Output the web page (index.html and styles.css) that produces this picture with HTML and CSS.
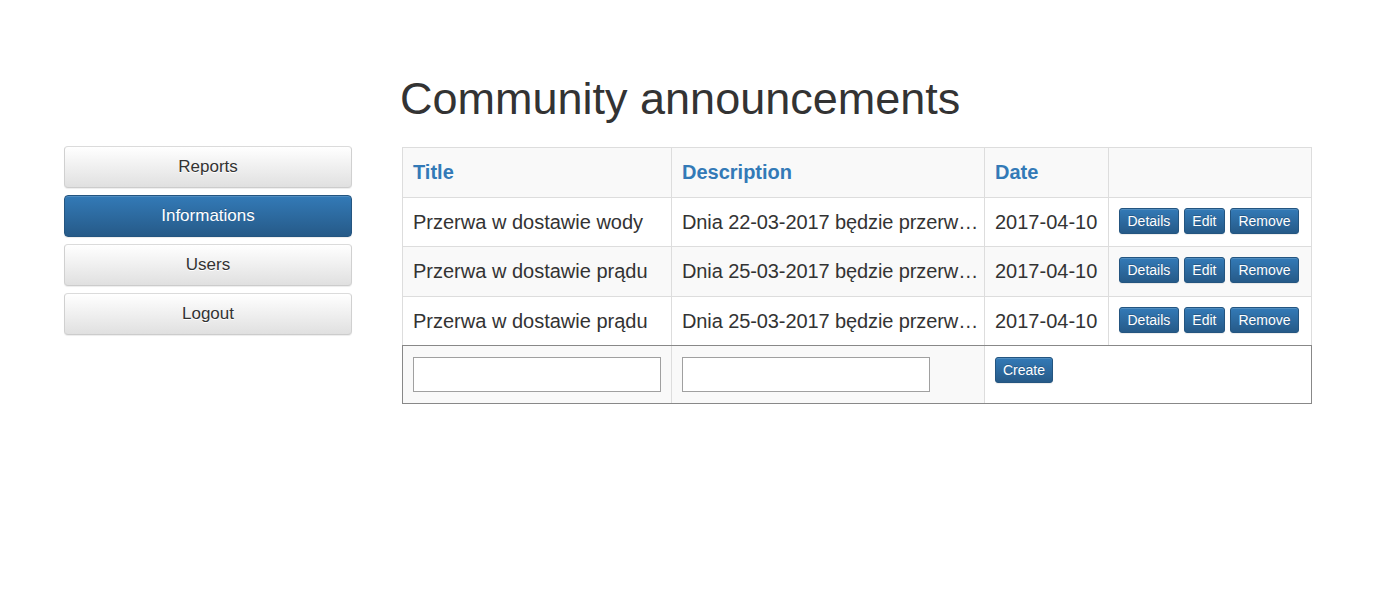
FILE: index.html
```html
<!DOCTYPE html>
<html lang="en">
<head>
<meta charset="utf-8">
<title>Community announcements</title>
<link rel="stylesheet" href="styles.css">
</head>
<body>
<div class="page">
  <h1 class="title">Community announcements</h1>
  <nav class="sidebar">
    <a class="side-btn">Reports</a>
    <a class="side-btn active">Informations</a>
    <a class="side-btn">Users</a>
    <a class="side-btn">Logout</a>
  </nav>
  <main class="main">
    <table class="grid">
      <colgroup>
        <col class="c-title">
        <col class="c-desc">
        <col class="c-date">
        <col class="c-act">
      </colgroup>
      <thead>
        <tr class="stripe">
          <th class="col-title"><a class="sort">Title</a></th>
          <th class="col-desc"><a class="sort">Description</a></th>
          <th class="col-date"><a class="sort">Date</a></th>
          <th></th>
        </tr>
      </thead>
      <tbody>
        <tr>
          <td class="col-title">Przerwa w dostawie wody</td>
          <td class="col-desc desc">Dnia 22-03-2017 będzie przerwa w dostawie wody</td>
          <td class="col-date">2017-04-10</td>
          <td class="actions"><a class="btn">Details</a> <a class="btn">Edit</a> <a class="btn">Remove</a></td>
        </tr>
        <tr class="stripe">
          <td class="col-title">Przerwa w dostawie prądu</td>
          <td class="col-desc desc">Dnia 25-03-2017 będzie przerwa w dostawie prądu</td>
          <td class="col-date">2017-04-10</td>
          <td class="actions"><a class="btn">Details</a> <a class="btn">Edit</a> <a class="btn">Remove</a></td>
        </tr>
        <tr class="last">
          <td class="col-title">Przerwa w dostawie prądu</td>
          <td class="col-desc desc">Dnia 25-03-2017 będzie przerwa w dostawie prądu</td>
          <td class="col-date">2017-04-10</td>
          <td class="actions"><a class="btn">Details</a> <a class="btn">Edit</a> <a class="btn">Remove</a></td>
        </tr>
        <tr class="form-row">
          <td class="f-cell"><input class="field" type="text"></td>
          <td class="f-cell"><input class="field" type="text"></td>
          <td class="f-create" colspan="2"><button class="btn btn-create" type="button">Create</button></td>
        </tr>
      </tbody>
    </table>
  </main>
</div>
</body>
</html>
```

FILE: styles.css
```css
html, body {
  margin: 0;
  padding: 0;
  background: #fff;
}

body {
  font-family: "Liberation Sans", Arial, Helvetica, sans-serif;
  color: #333;
}

.page {
  display: grid;
  grid-template-columns: 288px 912px;
  grid-template-rows: auto auto;
  column-gap: 48px;
  padding: 74px 0 0 64px;
}

.title {
  grid-column: 2;
  grid-row: 1;
  margin: 0 0 22.5px 0;
  font-size: 45px;
  font-weight: 400;
  line-height: 1.1;
  color: #333;
}

.sidebar {
  grid-column: 1;
  grid-row: 2;
  display: flex;
  flex-direction: column;
  gap: 7px;
}

.side-btn {
  display: block;
  box-sizing: border-box;
  height: 42px;
  padding: 8px 12px;
  font-size: 17px;
  line-height: 24px;
  text-align: center;
  color: #333;
  border: 1px solid #ccc;
  border-color: #dbdbdb #d0d0d0 #ccc;
  border-radius: 4px;
  background-image: linear-gradient(to bottom, #fff 0, #e0e0e0 100%);
  text-shadow: 0 1px 0 #fff;
  box-shadow: inset 0 1px 0 rgba(255, 255, 255, .15), 0 1px 1px rgba(0, 0, 0, .075);
}

.side-btn.active {
  color: #fff;
  border-color: #245580;
  background-image: linear-gradient(to bottom, #337ab7 0, #265a88 100%);
  text-shadow: 0 -1px 0 rgba(0, 0, 0, .2);
}

.main {
  grid-column: 2;
  grid-row: 2;
}

.grid {
  margin: 1px 0 0 2px;
  width: 909px;
  table-layout: fixed;
  border-collapse: collapse;
  border-spacing: 0;
  font-size: 20px;
  line-height: 1.42857;
}

.c-title { width: 269px; }
.c-desc { width: 313px; }
.c-date { width: 124px; }
.c-act { width: 203px; }

.grid th,
.grid td {
  padding: 10px 8px 10px 10px;
  border: 1px solid #ddd;
  text-align: left;
  vertical-align: top;
  white-space: nowrap;
}

.grid .col-desc {
  padding-right: 3px;
}

.grid th {
  font-weight: 700;
}

.sort {
  color: #337ab7;
  text-decoration: none;
}

.stripe th,
.stripe td {
  background: #f9f9f9;
}

.desc {
  overflow: hidden;
  text-overflow: ellipsis;
  letter-spacing: -0.1px;
}

.grid .actions {
  font-size: 0;
}

.actions .btn {
  vertical-align: middle;
  margin: 0 5px 0 0;
}

.btn {
  display: inline-block;
  box-sizing: border-box;
  height: 26px;
  padding: 2px 7.5px;
  font-family: "Liberation Sans", Arial, Helvetica, sans-serif;
  font-size: 14px;
  line-height: 20px;
  color: #fff;
  border: 1px solid #245580;
  border-radius: 3px;
  background-image: linear-gradient(to bottom, #337ab7 0, #265a88 100%);
  text-shadow: 0 -1px 0 rgba(0, 0, 0, .2);
  box-shadow: inset 0 1px 0 rgba(255, 255, 255, .15), 0 1px 1px rgba(0, 0, 0, .075);
  cursor: pointer;
}

.last td {
  border-bottom-color: #888;
}

.grid .form-row td {
  padding-top: 11px;
  padding-bottom: 11px;
  border-bottom-color: #888;
}

.grid .form-row .f-cell {
  padding-left: 8px;
}

.form-row td:first-child {
  border-left-color: #888;
}

.form-row td:last-child {
  border-right-color: #888;
}

.f-cell {
  background: #f9f9f9;
}

.f-create {
  background: #fff;
}

.field {
  display: block;
  box-sizing: border-box;
  width: 248px;
  height: 35px;
  margin: 0 0 0 2px;
  padding: 2px 4px;
  border: 1px solid #a0a0a0;
  border-radius: 0;
  background: #fff;
  font-family: "Liberation Sans", Arial, sans-serif;
  font-size: 14px;
}

.btn-create {
  display: block;
  padding: 2px 7px;
  margin: 0;
}
```
